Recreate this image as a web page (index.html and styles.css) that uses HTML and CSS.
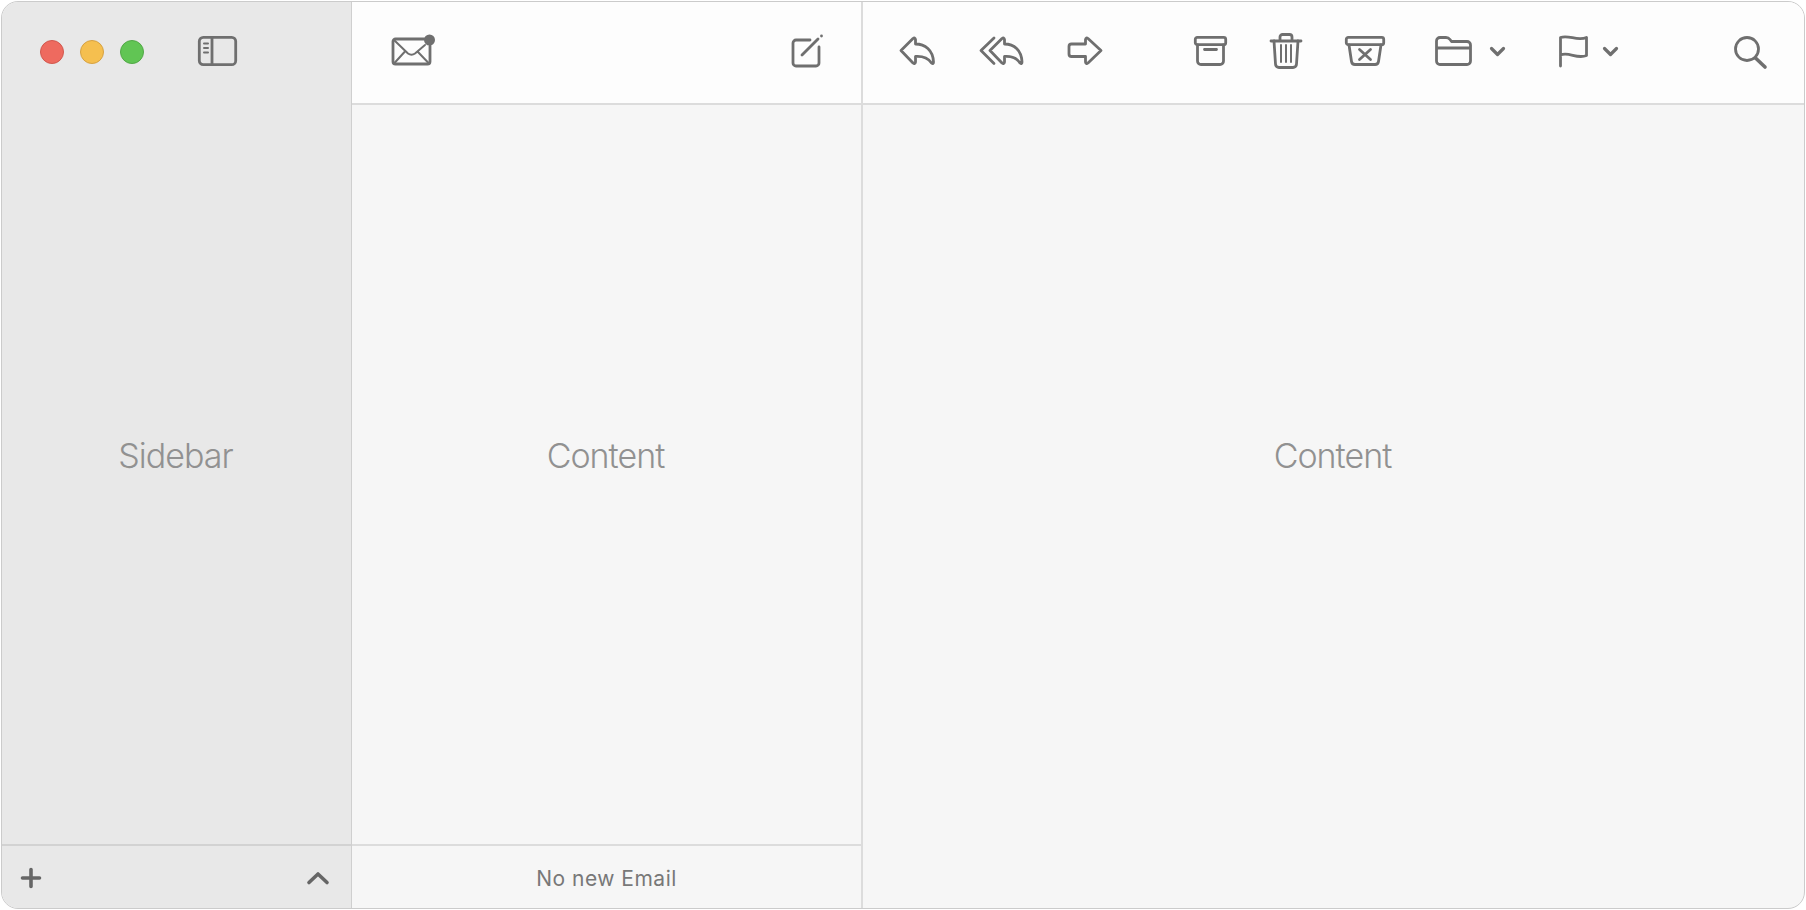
FILE: index.html
```html
<!DOCTYPE html>
<html lang="en">
<head>
    <meta charset="UTF-8">
    <title>Mail</title>
    <link rel="stylesheet" href="styles.css">
</head>
<body>
<div class="window">
    <div class="column sidebar">
        <div class="header sidebar_header">
            <span class="light red"></span>
            <span class="light yellow"></span>
            <span class="light green"></span>
            <svg class="icon toggle lift" width="39" height="30" viewBox="0 0 39 30">
                <rect x="1.300" y="1.300" width="36.400" height="27.400" rx="4"/>
                <path d="M14 1.300V28.700"/>
                <path class="fine" d="M6 7.500H10M6 12H10M6 16.500H10"/>
            </svg>
        </div>
        <div class="body body_with_footer"><span class="label">Sidebar</span></div>
        <div class="footer sidebar_footer">
            <svg class="icon thick" width="20" height="20" viewBox="0 0 20 20"><path d="M10 1.500V18.500M1.500 10H18.500"/></svg>
            <svg class="icon thick" width="22" height="12" viewBox="0 0 22 12"><path d="M2 10.500L11 2L20 10.500"/></svg>
        </div>
    </div>
    <div class="column list">
        <div class="header list_header">
            <svg class="icon lift" width="44" height="32" viewBox="0 0 44 32">
                <path d="M33 5H4.500a2.500 2.500 0 0 0-2.500 2.500V27.500a2.500 2.500 0 0 0 2.500 2.500H36.500a2.500 2.500 0 0 0 2.500-2.500V12"/>
                <path class="fine" d="M3 6L17 19.500q3.500 2.500 7 0L34 11M3 29.500L13.500 18M38 29.500L27 18"/>
                <circle class="dot" cx="38.500" cy="6" r="5.500"/>
            </svg>
            <svg class="icon lift" width="34" height="33" viewBox="0 0 34 33">
                <path d="M19 6H5a3 3 0 0 0-3 3V29a3 3 0 0 0 3 3H25a3 3 0 0 0 3-3V13"/>
                <path d="M11 21L27 5"/>
                <circle class="dot" cx="30.500" cy="2" r="1.400"/>
            </svg>
        </div>
        <div class="body body_with_footer"><span class="label">Content</span></div>
        <div class="footer list_footer">No new Email</div>
    </div>
    <div class="column message">
        <div class="header message_header">
            <svg class="icon" width="37" height="30" viewBox="0 0 37 30">
                <path d="M2 14.500L14 2.500q2-1.500 2.500 1V8C26 8 34 14 34.500 26q0 2.500-2 1C29 22 24 20 16.500 20.500V26q-.5 2.500-2.500 1Z"/>
            </svg>
            <svg class="icon" width="45" height="30" viewBox="0 0 45 30">
                <path d="M11 14.500L23 2.500q2-1.500 2.500 1V8C35 8 42.500 14 43 26q0 2.500-2 1C38 22 33 20 25.500 20.500V26q-.5 2.500-2.500 1Z"/>
                <path d="M15 2L2 14.500L15 27.500"/>
            </svg>
            <svg class="icon gap_big" width="36" height="30" viewBox="0 0 36 30">
                <path d="M21 2.500L34 14.500L21 27q-2 1.500-2.500-1V20.500H4.500a2.500 2.500 0 0 1-2.500-2.500V10.500A2.500 2.500 0 0 1 4.500 8H18.500V3.500q.5-2.500 2.500-1Z"/>
            </svg>
            <svg class="icon" width="33" height="30" viewBox="0 0 33 30">
                <rect x="1.300" y="1.300" width="30.400" height="7.400" rx="2"/>
                <path d="M3.500 9V25a3.500 3.500 0 0 0 3.500 3.500H26a3.500 3.500 0 0 0 3.500-3.500V9M10.500 13.500H22.500"/>
            </svg>
            <svg class="icon" width="32" height="36" viewBox="0 0 32 36">
                <path d="M1 8H31M10 8V4a2.500 2.500 0 0 1 2.500-2.500H19.500a2.500 2.500 0 0 1 2.500 2.500V8"/>
                <path d="M4 8L5.500 31a3.500 3.500 0 0 0 3.500 3.500H23a3.500 3.500 0 0 0 3.500-3.500L28 8"/>
                <path class="fine" d="M11 12V29M16 12V29M21 12V29"/>
            </svg>
            <svg class="icon gap_mid" width="40" height="30" viewBox="0 0 40 30">
                <rect x="1.300" y="1.300" width="37.400" height="7.400" rx="2"/>
                <path d="M4 9L6.500 25.500a3.500 3.500 0 0 0 3.500 3H30a3.500 3.500 0 0 0 3.500-3L36 9M14.500 13.500L25.500 23.500M25.500 13.500L14.500 23.500"/>
            </svg>
            <svg class="icon gap_small" width="37" height="30" viewBox="0 0 37 30">
                <path d="M1.500 12V5a3.500 3.500 0 0 1 3.500-3.500H11q2.500 0 4 2l1.500 2H32a3.500 3.500 0 0 1 3.500 3.500V25a3.500 3.500 0 0 1-3.500 3.500H5A3.500 3.500 0 0 1 1.500 25ZM1.500 12H35.500"/>
            </svg>
            <svg class="icon thick_small gap_flag" width="15" height="9" viewBox="0 0 15 9"><path d="M1.500 1.500L7.500 7.500L13.500 1.500"/></svg>
            <svg class="icon gap_tiny" width="29" height="32" viewBox="0 0 29 32">
                <path d="M1.500 31V2.500C10 -0.500 18 6.500 27.500 2.500V20.500C18 24.500 10 16.500 1.500 20"/>
            </svg>
            <svg class="icon thick_small" width="15" height="9" viewBox="0 0 15 9"><path d="M1.500 1.500L7.500 7.500L13.500 1.500"/></svg>
            <svg class="icon search" width="33" height="33" viewBox="0 0 33 33">
                <circle cx="13" cy="14" r="11.500"/>
                <path class="handle" d="M21.500 23L31 32"/>
            </svg>
        </div>
        <div class="body body_full"><span class="label">Content</span></div>
    </div>
</div>
</body>
</html>
```

FILE: styles.css
```css
* {
    box-sizing: border-box;
}

html, body {
    height: 100%;
}

body {
    margin: 0;
    padding: 1px;
    background-color: #ffffff;
    font-family: Inter, "Liberation Sans", sans-serif;
}

.window {
    display: flex;
    height: 100%;
    overflow: hidden;
    border: 1px solid #cbcbcb;
    border-radius: 17px;
    background-color: #f6f6f6;
}

.column {
    display: flex;
    flex-direction: column;
}

.sidebar {
    width: 350px;
    background-color: #e8e8e8;
    border-right: 1px solid #cfcfcf;
}

.list {
    width: 511px;
    border-right: 2px solid #dcdcdc;
}

.message {
    flex: 1;
}

.header {
    display: flex;
    align-items: center;
    flex-shrink: 0;
    height: 103px;
    padding-bottom: 3px;
    background-color: #fdfdfd;
    border-bottom: 2px solid #dcdcdc;
}

.sidebar_header {
    padding-left: 38px;
    gap: 16px;
    background-color: transparent;
    border-bottom: none;
}

.list_header {
    justify-content: space-between;
    padding-left: 39px;
    padding-right: 36px;
}

.message_header {
    gap: 43px;
    padding-left: 36px;
    padding-right: 37px;
}

.light {
    width: 24px;
    height: 24px;
    border-radius: 50%;
    border: 1px solid;
}

.red {
    background-color: #ee6a5f;
    border-color: #d1584e;
}

.yellow {
    background-color: #f5bf4f;
    border-color: #d6a243;
}

.green {
    background-color: #61c554;
    border-color: #52a847;
}

.toggle {
    margin-left: 38px;
}

.icon {
    flex-shrink: 0;
    overflow: visible;
    fill: none;
    stroke: #6f6f6f;
    stroke-width: 2.800;
    stroke-linecap: round;
    stroke-linejoin: round;
}

.fine {
    stroke-width: 2;
}

.lift {
    margin-top: -2px;
}

.dot {
    fill: #6f6f6f;
    stroke: none;
}

.thick {
    stroke: #666666;
    stroke-width: 3.600;
}

.thick_small {
    stroke-width: 3.200;
}

.handle {
    stroke-width: 3.600;
}

.gap_big {
    margin-right: 48px;
}

.gap_mid {
    margin-right: 7px;
}

.gap_small {
    margin-right: -25px;
}

.gap_flag {
    margin-right: 11px;
}

.gap_tiny {
    margin-right: -28px;
}

.search {
    margin-left: auto;
}

.body {
    display: flex;
    flex: 1;
    align-items: center;
    justify-content: center;
}

.body_with_footer {
    padding-bottom: 38px;
}

.body_full {
    padding-bottom: 102px;
}

.label {
    margin-right: 2px;
    font-size: 34px;
    font-weight: 300;
    letter-spacing: -1px;
    color: #919191;
}

.footer {
    display: flex;
    align-items: center;
    flex-shrink: 0;
    height: 64px;
    padding-top: 2px;
}

.sidebar_footer {
    justify-content: space-between;
    padding-left: 19px;
    padding-right: 22px;
    border-top: 2px solid #d2d2d2;
}

.list_footer {
    justify-content: center;
    font-size: 21px;
    letter-spacing: 0.5px;
    color: #787878;
    border-top: 2px solid #dcdcdc;
}
```
